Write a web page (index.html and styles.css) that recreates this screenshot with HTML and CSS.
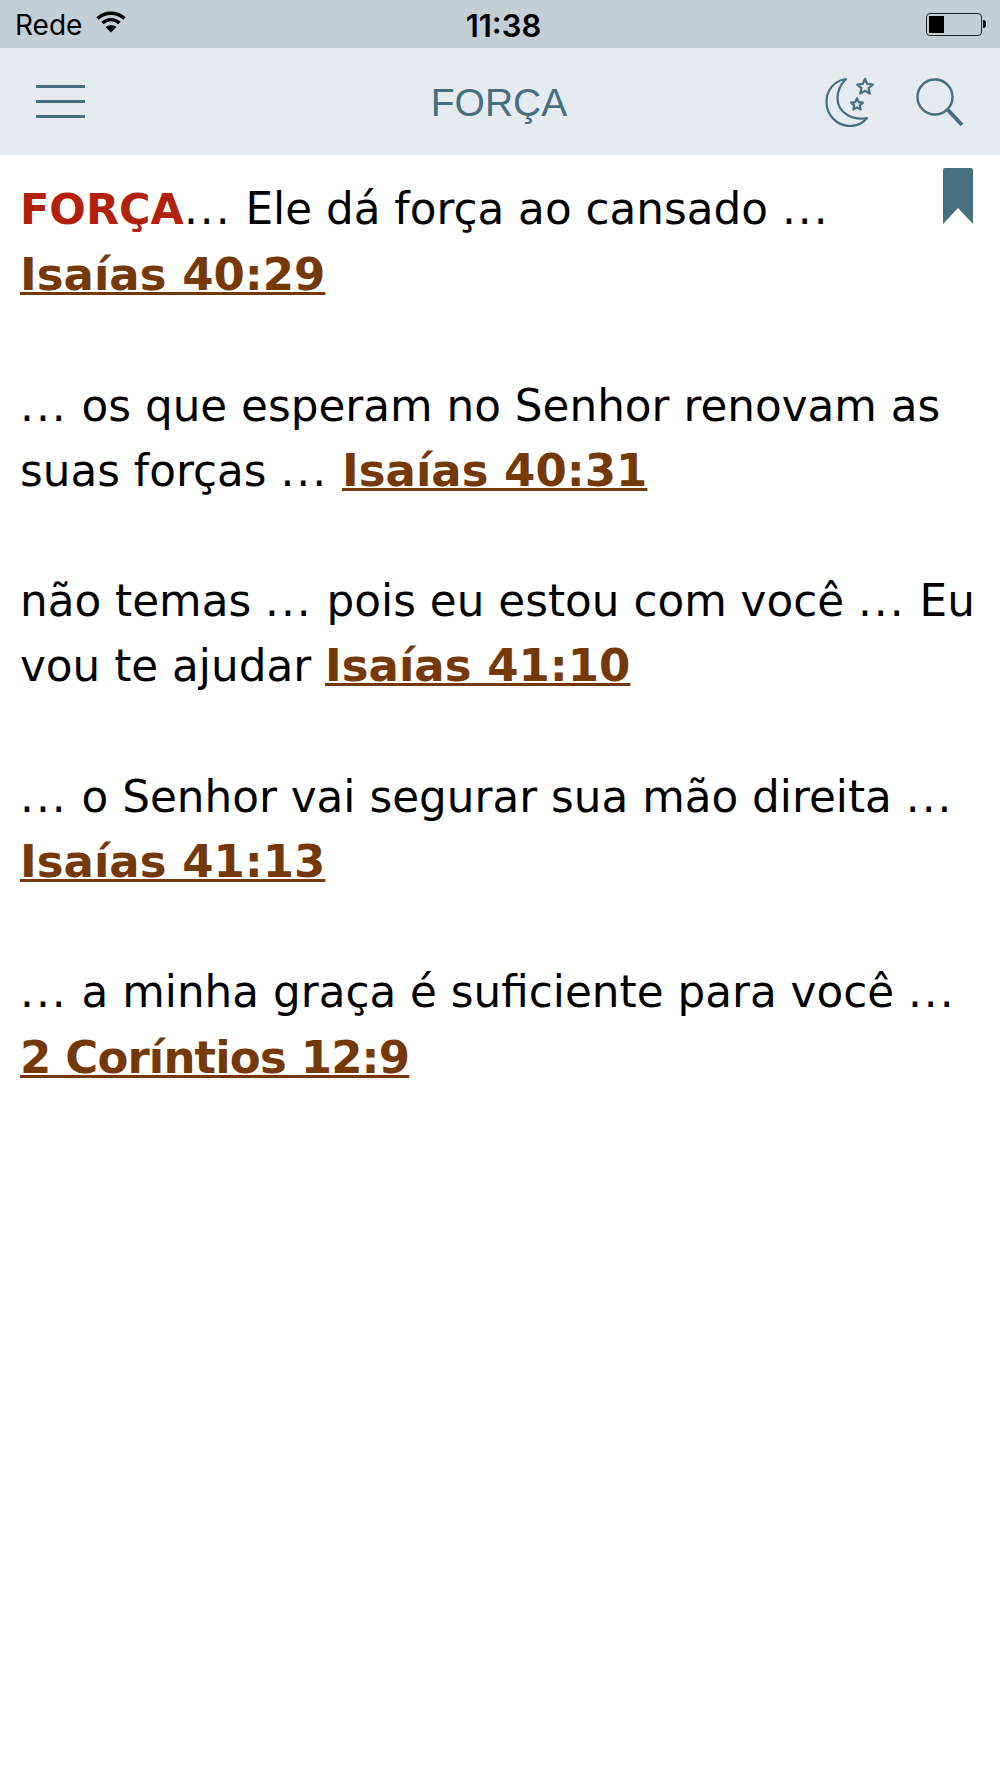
FILE: index.html
```html
<!DOCTYPE html>
<html lang="pt">
<head>
  <meta charset="UTF-8" />
  <meta name="viewport" content="width=device-width, initial-scale=1" />
  <title>FORÇA</title>
  <link rel="stylesheet" href="styles.css">
</head>
<body>

<div class="statusbar">
  <div class="status-left">
    <span>Rede</span>
    <svg class="wifi" width="30" height="22" viewBox="0 0 30 22">
      <path d="M1.500 7.500 C9 0.500 21 0.500 28.500 7.500" fill="none" stroke="#000" stroke-width="3.400"/>
      <path d="M6.500 12 C11.500 7.500 18.500 7.500 23.500 12" fill="none" stroke="#000" stroke-width="3.400"/>
      <path d="M15 21.500 L9.500 16 C12.500 13.500 17.500 13.500 20.500 16 Z" fill="#000"/>
    </svg>
  </div>
  <div class="status-time">11:38</div>
  <div class="battery">
    <div class="battery-body"><div class="battery-level"></div></div>
    <div class="battery-tip"></div>
  </div>
</div>

<div class="navbar">
  <div class="menu-btn">
    <span></span>
    <span></span>
    <span></span>
  </div>
  <div class="nav-title">FORÇA</div>
  <div class="nav-icons">
    <svg width="50" height="50" viewBox="0 0 50 50" fill="none" stroke="#44707f" stroke-width="2.200" stroke-linejoin="round">
      <path d="M21 2 C8 4 1.500 14 1.500 25 C1.500 38 12 49 25 49 C32 49 38 46 42 41 C28 44 12.500 36 12.500 21 C12.500 13 16 7 21 2 Z"/>
      <path d="M40 1.800 L42.230 6.930 L47.800 7.470 L43.610 11.170 L44.820 16.630 L40 13.800 L35.180 16.630 L36.390 11.170 L32.200 7.470 L37.770 6.930 Z"/>
      <path d="M32 21.300 L33.700 25.150 L37.900 25.580 L34.760 28.400 L35.640 32.520 L32 30.400 L28.360 32.520 L29.240 28.400 L26.100 25.580 L30.300 25.150 Z"/>
    </svg>
    <svg width="50" height="50" viewBox="0 0 50 50" fill="none" stroke="#44707f">
      <circle cx="20" cy="20" r="17.500" stroke-width="2.400"/>
      <path d="M33 33 L47 48" stroke-width="4"/>
    </svg>
  </div>
</div>

<div class="content">
  <svg class="bookmark" width="30" height="57" viewBox="0 0 30 57">
    <path d="M2 0 H28 Q30 0 30 2 V56 L15 40 L0 56 V2 Q0 0 2 0 Z" fill="#44707f"/>
  </svg>
  <p class="verses"><b class="word">FORÇA</b><span class="dots">...</span> Ele dá força ao cansado <span class="dots">...</span> <a href="#">Isaías 40:29</a><br><br><span class="dots">...</span> os que esperam no Senhor renovam as suas forças <span class="dots">...</span> <a href="#">Isaías 40:31</a><br><br>não temas <span class="dots">...</span> pois eu estou com você <span class="dots">...</span> Eu vou te ajudar <a href="#">Isaías 41:10</a><br><br><span class="dots">...</span> o Senhor vai segurar sua mão direita <span class="dots">...</span> <a href="#">Isaías 41:13</a><br><br><span class="dots">...</span> a minha graça é suficiente para você <span class="dots">...</span> <a class="tight" href="#">2 Coríntios 12:9</a></p>
</div>

</body>
</html>
```

FILE: styles.css
```css
body {
  margin: 0;
  background: #fff;
  font-family: "Liberation Sans", Arial, sans-serif;
}

.statusbar {
  height: 48px;
  background: #c3cfd5;
  display: grid;
  grid-template-columns: 1fr auto 1fr;
  align-items: center;
  padding: 2px 14px 0 15px;
  box-sizing: border-box;
  color: #000;
}

.status-left {
  display: flex;
  align-items: center;
  gap: 14px;
  font-size: 28px;
  font-family: Inter, sans-serif;
}

.wifi {
  margin-top: -6px;
}

.status-time {
  margin-left: 6px;
  font-size: 31px;
  font-weight: 600;
  font-family: Inter, sans-serif;
}

.battery {
  display: flex;
  align-items: center;
  justify-content: flex-end;
  margin-top: -2px;
}

.battery-body {
  width: 50px;
  height: 17px;
  padding: 2px;
  border: 1.5px solid #222;
  border-radius: 4px;
}

.battery-level {
  width: 15px;
  height: 17px;
  background: #000;
}

.battery-tip {
  width: 3px;
  height: 8px;
  background: #000;
  border-radius: 0 3px 3px 0;
  margin-left: 1px;
}

.navbar {
  height: 107px;
  background: #e6ebef;
  display: grid;
  grid-template-columns: 1fr auto 1fr;
  align-items: center;
  padding: 0 36px;
}

.menu-btn {
  width: 49px;
  height: 33px;
  display: flex;
  flex-direction: column;
  justify-content: space-between;
}

.menu-btn span {
  display: block;
  height: 3px;
  background: #44707f;
}

.nav-title {
  margin: 3px 2px 0 0;
  font-size: 39px;
  color: #44707f;
}

.nav-icons {
  display: flex;
  justify-content: flex-end;
  gap: 40px;
  margin-right: -1px;
}

.content {
  position: relative;
  padding: 21px 20px 0;
}

.bookmark {
  position: absolute;
  top: 13px;
  right: 27px;
}

.verses {
  margin: 0;
  font-family: "DejaVu Sans", Verdana, sans-serif;
  font-size: 43.700px;
  line-height: 65.200px;
  color: #000;
}

.dots {
  letter-spacing: 2px;
}

.word {
  font-size: 43px;
  color: #b2210c;
}

.verses a {
  font-size: 45px;
  font-weight: bold;
  color: #753807;
  white-space: nowrap;
  text-decoration: underline;
  text-decoration-thickness: 3px;
}

.verses a.tight {
  letter-spacing: -0.850px;
}
```
